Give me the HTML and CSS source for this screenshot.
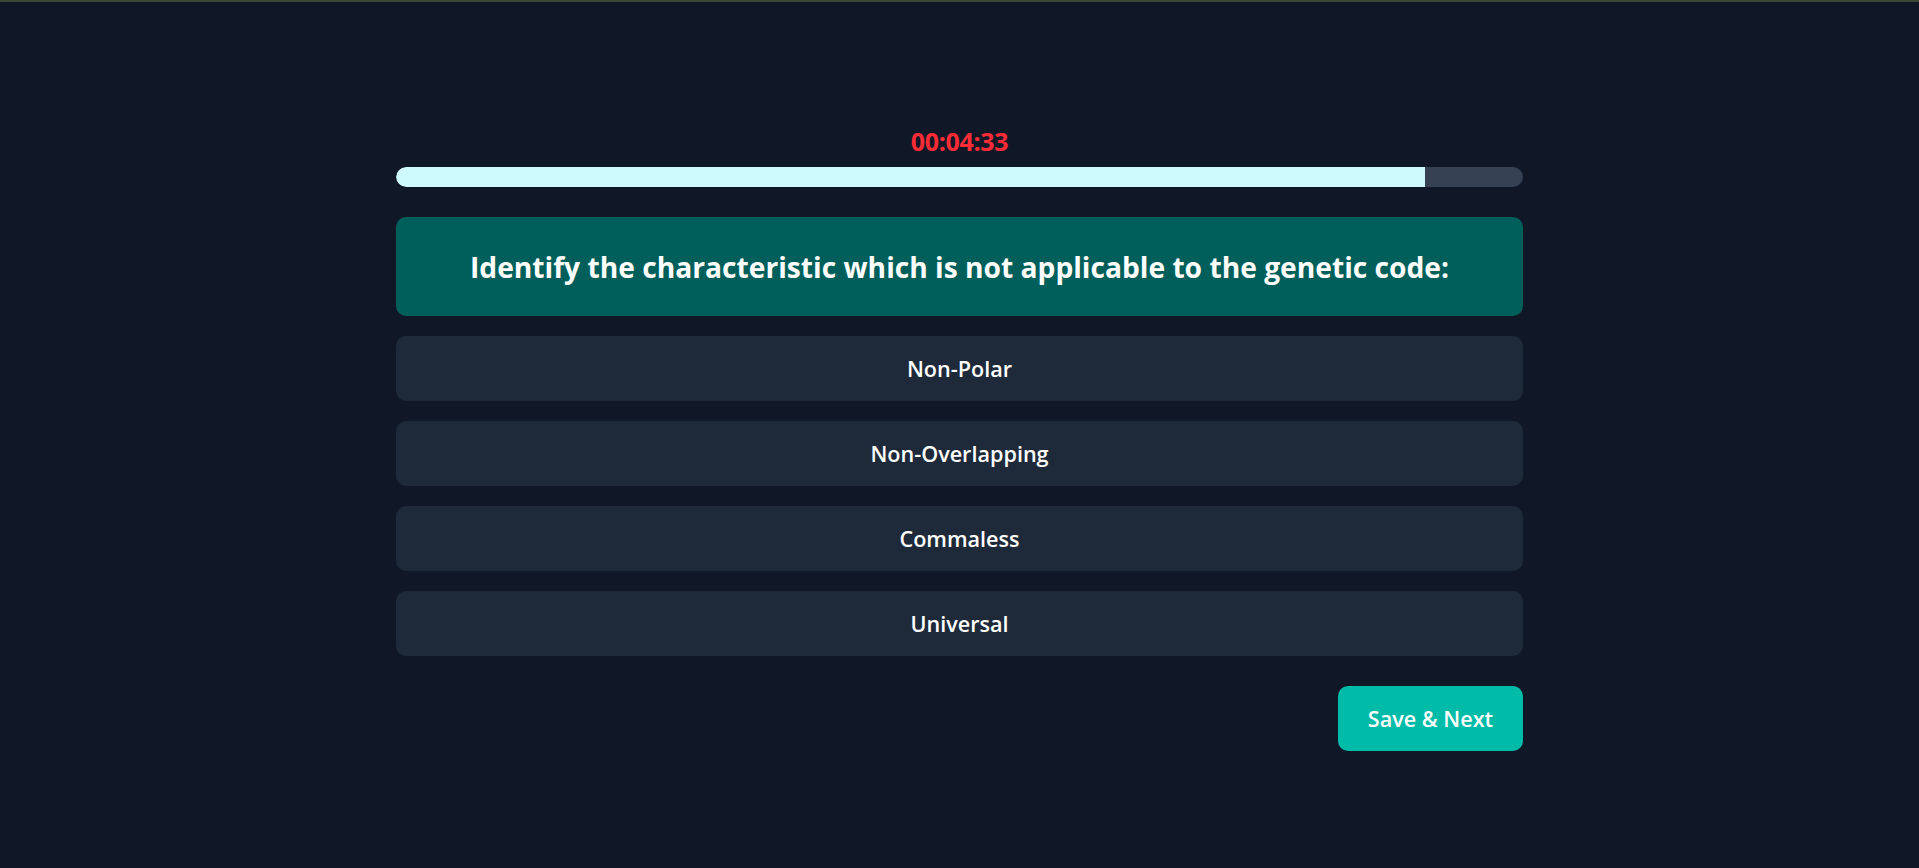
FILE: index.html
```html
<!DOCTYPE html>
<html lang="en">
<head>
<meta charset="utf-8">
<title>Quiz</title>
<link rel="stylesheet" href="styles.css">
</head>
<body>
<div class="topline"></div>
<main class="quiz">
  <div class="timer">00:04:33</div>
  <div class="progress"><div class="progress-fill" style="width: 91.3%"></div></div>
  <div class="question">Identify the characteristic which is not applicable to the genetic code:</div>
  <div class="options">
    <button class="option">Non-Polar</button>
    <button class="option">Non-Overlapping</button>
    <button class="option">Commaless</button>
    <button class="option">Universal</button>
  </div>
  <div class="actions">
    <button class="next">Save &amp; Next</button>
  </div>
</main>
</body>
</html>
```
FILE: styles.css
```css
* { box-sizing: border-box; }
html, body { margin: 0; padding: 0; }
body {
  background: #101828;
  font-family: "Open Sans", "Noto Sans", sans-serif;
  color: #fff;
  height: 868px;
  overflow: hidden;
}
.topline { height: 2px; background: #3a4834; }
.quiz {
  width: 1127px;
  margin: 0 auto;
  padding-top: 122px;
  display: flex;
  flex-direction: column;
}
.timer {
  height: 34px;
  line-height: 34px;
  text-align: center;
  color: #fb2c36;
  font-weight: 700;
  font-size: 25px;
  letter-spacing: -0.3px;
  margin-bottom: 9px;
}
.progress {
  height: 20px;
  border-radius: 10px;
  background: #364153;
  overflow: hidden;
}
.progress-fill { height: 100%; background: #cefafe; border-radius: 10px 0 0 10px; }
.question {
  margin-top: 30px;
  height: 99px;
  border-radius: 10px;
  background: #005f5a;
  display: flex;
  align-items: center;
  justify-content: center;
  font-size: 28.2px;
  font-weight: 700;
  padding: 0 20px;
}
.options {
  margin-top: 20px;
  display: flex;
  flex-direction: column;
  gap: 20px;
}
.option {
  height: 65px;
  border: 0;
  border-radius: 10px;
  background: #1e2939;
  color: #fff;
  font-family: inherit;
  font-size: 21.6px;
  font-weight: 600;
}
.actions {
  margin-top: 30px;
  display: flex;
  justify-content: flex-end;
}
.next {
  width: 185px;
  height: 65px;
  border: 0;
  border-radius: 10px;
  background: #00bba7;
  color: #fff;
  font-family: inherit;
  font-size: 21.6px;
  font-weight: 600;
}
```
